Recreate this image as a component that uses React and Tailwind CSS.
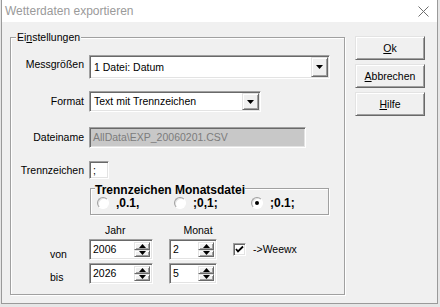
import React from 'react';

const sunken =
  'border border-t-[#a0a0a0] border-l-[#a0a0a0] border-r-white border-b-white shadow-[inset_1px_1px_0_#696969,inset_-1px_-1px_0_#e3e3e3]';
const raised =
  'border border-t-[#e3e3e3] border-l-[#e3e3e3] border-r-[#696969] border-b-[#696969] shadow-[inset_1px_1px_0_#fff,inset_-1px_-1px_0_#a0a0a0]';

function Down({ w = 7, h = 4 }) {
  return (
    <svg width={w} height={h} viewBox={`0 0 ${w} ${h}`}>
      <polygon points={`0,0 ${w},0 ${w / 2},${h}`} fill="#000" />
    </svg>
  );
}

function Up({ w = 7, h = 4 }) {
  return (
    <svg width={w} height={h} viewBox={`0 0 ${w} ${h}`}>
      <polygon points={`0,${h} ${w},${h} ${w / 2},0`} fill="#000" />
    </svg>
  );
}

function Combo({ className, text }) {
  return (
    <div className={`${sunken} ${className} bg-white flex p-px`}>
      <div className="flex-1 flex items-center pl-[3px] leading-[13px]">{text}</div>
      <div className={`${raised} w-[17px] bg-[#f0f0f0] flex items-center justify-center`}>
        <Down />
      </div>
    </div>
  );
}

function Spin({ className, value }) {
  return (
    <div className={`${sunken} ${className} bg-white flex p-px`}>
      <div className="flex-1 flex items-center pl-[2px] leading-[13px]">{value}</div>
      <div className="w-[16px] flex flex-col mr-px my-px">
        <div className={`${raised} flex-1 bg-[#f0f0f0] flex items-center justify-center`}>
          <Up w={7} h={4} />
        </div>
        <div className={`${raised} flex-1 bg-[#f0f0f0] flex items-center justify-center`}>
          <Down w={7} h={4} />
        </div>
      </div>
    </div>
  );
}

function Radio({ checked, label }) {
  return (
    <div className="flex items-center gap-[7px] w-[78px]">
      <div className="w-[12px] h-[12px] rounded-full border border-t-[#a0a0a0] border-l-[#a0a0a0] border-r-white border-b-white bg-white flex items-center justify-center shadow-[inset_1px_1px_0_#e3e3e3]">
        {checked && <div className="w-[4px] h-[4px] rounded-full bg-black" />}
      </div>
      <span className="font-bold text-[12px] leading-[14px]">{label}</span>
    </div>
  );
}

function Button({ mnemonic, rest }) {
  return (
    <div className={`${raised} w-[70px] h-[24px] bg-[#f0f0f0] flex items-center justify-center leading-[13px]`}>
      <span>
        <u>{mnemonic}</u>
        {rest}
      </span>
    </div>
  );
}

export default function App() {
  return (
    <div className="w-[440px] h-[307px] bg-[#e6e6e6] overflow-hidden font-['Liberation_Sans',Arial,sans-serif] text-[10.5px] text-black">
      <div className="w-[437px] h-[304px] ml-px bg-[#f0f0f0] border-x border-b border-[#9a9a9a] flex flex-col">
        {/* title bar */}
        <div className="h-[22px] bg-white flex items-center justify-between pl-[3px] pr-[8px]">
          <span className="text-[12px] text-[#9a9a9a] leading-[14px]">Wetterdaten exportieren</span>
          <svg width="11" height="11" viewBox="0 0 11 11">
            <path d="M0.5 0.5 L10.5 10.5 M10.5 0.5 L0.5 10.5" stroke="#6e6e6e" strokeWidth="1" />
          </svg>
        </div>

        <div className="flex items-start pl-[8px] pt-[15px]">
          {/* Einstellungen group */}
          <div className="relative w-[335px] h-[258px] border border-[#a0a0a0] shadow-[1px_1px_0_#fff,inset_1px_1px_0_#fff] flex flex-col">
            <span className="absolute left-[5px] -top-[7px] bg-[#f0f0f0] px-px leading-[13px]">
              Ei<u>n</u>stellungen
            </span>

            <div className="flex items-center mt-[17px] h-[24px]">
              <span className="w-[73px] text-right mr-[5px] mb-[6px] leading-[13px]">Messgrößen</span>
              <Combo className="w-[241px] h-[24px]" text="1 Datei: Datum" />
            </div>

            <div className="flex items-center mt-[12px] h-[21px]">
              <span className="w-[73px] text-right mr-[5px] leading-[13px]">Format</span>
              <Combo className="w-[172px] h-[21px]" text="Text mit Trennzeichen" />
            </div>

            <div className="flex items-center mt-[15px] h-[21px]">
              <span className="w-[73px] text-right mr-[5px] leading-[13px]">Dateiname</span>
              <div className={`${sunken} w-[217px] h-[21px] bg-[#c8c8c8] text-[#7c7c7c] flex items-center pl-[3px] leading-[13px]`}>
                AllData\EXP_20060201.CSV
              </div>
            </div>

            <div className="flex items-center mt-[13px] h-[18px]">
              <span className="w-[73px] text-right mr-[5px] leading-[13px]">Trennzeichen</span>
              <div className={`${sunken} w-[20px] h-[18px] bg-white flex items-center pl-[3px] leading-[13px]`}>;</div>
            </div>

            {/* Trennzeichen Monatsdatei group */}
            <div className="relative ml-[79px] mt-[9px] w-[239px] h-[27px] border border-[#a0a0a0] shadow-[1px_1px_0_#fff,inset_1px_1px_0_#fff] flex items-center pl-[6px] pt-[2px]">
              <span className="absolute left-[4px] -top-[6px] bg-[#f0f0f0] font-bold text-[12px] leading-[14px]">
                Trennzeichen Monatsdatei
              </span>
              <Radio label=",0.1," />
              <Radio label=";0,1;" />
              <Radio checked label=";0.1;" />
            </div>

            <div className="flex mt-[9px] leading-[13px]">
              <span className="ml-[94px]">Jahr</span>
              <span className="ml-[58px]">Monat</span>
            </div>

            <div className="flex items-center mt-[2px] h-[21px]">
              <span className="self-start pt-[9px] ml-[39px] w-[39px] leading-[13px]">von</span>
              <Spin className="w-[64px] h-[21px]" value="2006" />
              <Spin className="w-[48px] h-[21px] ml-[16px]" value="2" />
              <div className={`${sunken} w-[13px] h-[13px] bg-white ml-[16px] flex items-center justify-center`}>
                <svg width="9" height="9" viewBox="0 0 9 9">
                  <path d="M1 4 L3 6.5 L8 1.5" stroke="#000" strokeWidth="1.8" fill="none" />
                </svg>
              </div>
              <span className="ml-[7px] leading-[13px]">-&gt;Weewx</span>
            </div>

            <div className="flex items-center mt-[3px] h-[21px]">
              <span className="self-start pt-[8px] ml-[39px] w-[39px] leading-[13px]">bis</span>
              <Spin className="w-[64px] h-[21px]" value="2026" />
              <Spin className="w-[48px] h-[21px] ml-[16px]" value="5" />
            </div>
          </div>

          {/* buttons */}
          <div className="flex flex-col gap-[4px] ml-[10px] -mt-px">
            <Button mnemonic="O" rest="k" />
            <Button mnemonic="A" rest="bbrechen" />
            <Button mnemonic="H" rest="ilfe" />
          </div>
        </div>
      </div>
    </div>
  );
}
